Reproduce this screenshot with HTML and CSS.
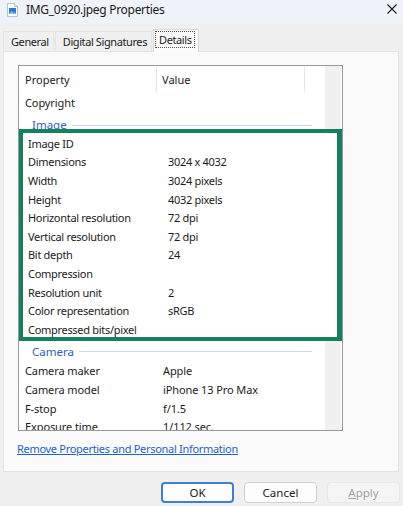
FILE: index.html
```
<!DOCTYPE html>
<html lang="en">
<head>
    <meta charset="UTF-8">
    <meta name="viewport" content="width=device-width, initial-scale=1.0">
    <title>IMG_0920.jpeg Properties</title>
    <link rel="stylesheet" href="styles.css">
</head>
<body>
    <div class="window">
        <div class="titlebar">
            <svg class="file-icon" width="11" height="14" viewBox="0 0 11 14">
                <path d="M0.5 0.5h7l3 3v10h-10z" fill="#fff" stroke="#b8c4d2"/>
                <path d="M7.5 0.5v3h3" fill="#e6ecf3" stroke="#b8c4d2"/>
                <rect x="2" y="5" width="7" height="6" fill="#2a7ad6"/>
                <path d="M2 11l2.5-3 2 2 1-1 1.5 2z" fill="#7fc0f5"/>
            </svg>
            <span class="title">IMG_0920.jpeg Properties</span>
            <svg class="close" width="10" height="10" viewBox="0 0 10 10">
                <path d="M0.5 0.5l9 9M9.5 0.5l-9 9" stroke="#1c1c1c" stroke-width="1.1"/>
            </svg>
        </div>

        <div class="tabs">
            <div class="tab">General</div>
            <div class="tab">Digital Signatures</div>
            <div class="tab selected"><span class="focus">Details</span></div>
        </div>

        <div class="panel">
            <div class="list">
                <div class="list-head">
                    <span class="col-prop">Property</span>
                    <span class="col-val">Value</span>
                </div>
                <div class="row"><span class="col-prop">Copyright</span><span class="col-val"></span></div>
                <div class="group group-cut"><span>Image</span></div>

                <div class="highlight">
                    <div class="row"><span class="col-prop">Image ID</span><span class="col-val"></span></div>
                    <div class="row"><span class="col-prop">Dimensions</span><span class="col-val">3024 x 4032</span></div>
                    <div class="row"><span class="col-prop">Width</span><span class="col-val">3024 pixels</span></div>
                    <div class="row"><span class="col-prop">Height</span><span class="col-val">4032 pixels</span></div>
                    <div class="row"><span class="col-prop">Horizontal resolution</span><span class="col-val">72 dpi</span></div>
                    <div class="row"><span class="col-prop">Vertical resolution</span><span class="col-val">72 dpi</span></div>
                    <div class="row"><span class="col-prop">Bit depth</span><span class="col-val">24</span></div>
                    <div class="row"><span class="col-prop">Compression</span><span class="col-val"></span></div>
                    <div class="row"><span class="col-prop">Resolution unit</span><span class="col-val">2</span></div>
                    <div class="row"><span class="col-prop">Color representation</span><span class="col-val">sRGB</span></div>
                    <div class="row"><span class="col-prop">Compressed bits/pixel</span><span class="col-val"></span></div>
                </div>

                <div class="group"><span>Camera</span></div>
                <div class="row"><span class="col-prop">Camera maker</span><span class="col-val">Apple</span></div>
                <div class="row"><span class="col-prop">Camera model</span><span class="col-val">iPhone 13 Pro Max</span></div>
                <div class="row"><span class="col-prop">F-stop</span><span class="col-val">f/1.5</span></div>
                <div class="row"><span class="col-prop">Exposure time</span><span class="col-val">1/112 sec.</span></div>
            </div>
            <a class="link" href="#">Remove Properties and Personal Information</a>
        </div>

        <div class="buttons">
            <button class="btn default">OK</button>
            <button class="btn">Cancel</button>
            <button class="btn disabled"><u>A</u>pply</button>
        </div>
    </div>
</body>
</html>
```

FILE: styles.css
```
body { margin: 0; font-family: "Noto Sans", "Open Sans", sans-serif; font-size: 11px; color: #1b1b1b; }
.window { width: 403px; height: 506px; background: #f0f0f0; overflow: hidden; }

/* title bar */
.titlebar { height: 24px; background: #eef3f9; display: flex; align-items: center; padding: 0 0 0 7px; box-sizing: border-box; }
.file-icon { margin: -4px 8px 0 0; }
.title { font-size: 12px; letter-spacing: -0.3px; margin-top: -5px; color: #1a1a1a; }
.close { margin: -6px 6px 0 auto; }

/* tabs */
.tabs { display: flex; align-items: flex-end; height: 27px; padding-left: 3px; letter-spacing: -0.4px; }
.tab { height: 19px; line-height: 20px; padding: 0 4px 0 7px; border: 1px solid #e4e4e4; border-bottom: none; background: #f0f0f0; margin-right: 1px; color: #1b1b1b; }
.tab.selected { height: 22px; line-height: 20px; padding: 0 3px 0 1px; background: #fbfbfb; border-color: #d9d9d9; margin-bottom: -1px; position: relative; }
.focus { border: 1px dotted #555; padding: 0 2px 0 3px; }

/* panel */
.panel { margin: 0 4px 0 3px; height: 421px; box-sizing: border-box; border: 1px solid #e3e3e3; background: #fafafa; padding: 13px 0 0 14px; }
.list { width: 325px; height: 366px; box-sizing: border-box; border: 1px solid #9a9a9a; overflow: hidden;
    background: linear-gradient(to right, #fff 0, #fff 306px, #f0f0f0 306px, #f0f0f0 322px, #fff 322px); }
.list-head { height: 27px; display: flex; align-items: center; }
.list-head .col-prop { width: 131px; border-right: 1px solid #e5e5e5; height: 25px; line-height: 25px; }
.list-head .col-val { border-right: 1px solid #e5e5e5; height: 25px; line-height: 25px; width: 142px; padding-left: 5px; }
.row { height: 18.6px; display: flex; align-items: center; white-space: nowrap; letter-spacing: -0.1px; }
.col-prop { width: 138px; padding-left: 6px; flex: none; }
.col-val { flex: none; }

.group { height: 21px; display: flex; align-items: center; padding: 0 12px 0 13px; color: #2b5fc0; font-size: 11.5px; width: 305px; box-sizing: border-box; }
.group::after { content: ""; flex: 1; height: 1px; background: #c9d7f0; margin-left: 5px; }
.group-cut { height: 17px; overflow: hidden; align-items: flex-start; padding-top: 5px; }
.group-cut span { line-height: 16px; }
.group-cut::after { margin-top: 8px; }

/* green annotation box */
.highlight { height: 212px; box-sizing: border-box; border: 4px solid #13805f; border-right-width: 5px; background: #fff; overflow: hidden; padding-top: 1.5px; }
.highlight .row { letter-spacing: -0.3px; }
.highlight .col-prop { width: 140px; padding-left: 5px; }

.link { display: inline-block; margin: 10px 0 0 -1px; line-height: 16px; color: #1b64c9; font-size: 11px; letter-spacing: -0.3px; }

/* buttons */
.buttons { display: flex; justify-content: flex-end; gap: 10px; padding: 10px 3px 0 0; }
.btn { width: 73px; height: 21px; box-sizing: border-box; border: 1px solid #d0d0d0; border-radius: 4px; background: #fdfdfd; font-family: inherit; font-size: 11.5px; color: #1b1b1b; padding: 0; }
.btn.default { border: 2px solid #3d7fd0; }
.btn.disabled { background: #f5f5f5; border-color: #e8e8e8; color: #a0a0a0; }
```
